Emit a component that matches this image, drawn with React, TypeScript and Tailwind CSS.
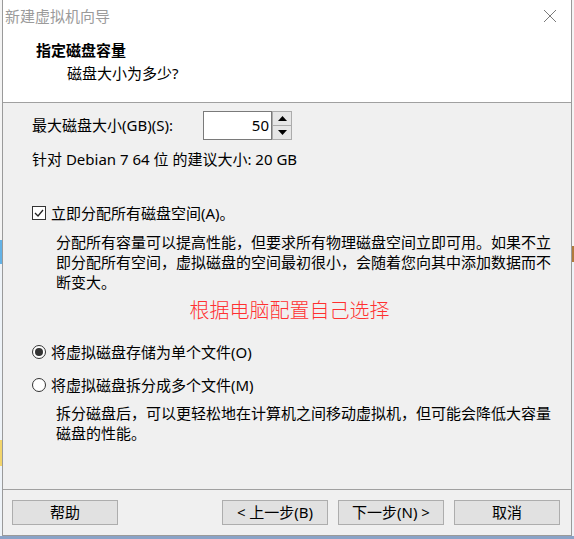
import React from 'react';

const font = "font-['Noto_Sans','Noto_Sans_CJK_SC',sans-serif]";

const WinButton: React.FC<{ label: string }> = ({ label }) => (
  <div className="w-[106px] h-[25px] flex items-center justify-center bg-[#e1e1e1] border border-[#adadad] text-[15px] text-black">
    {label}
  </div>
);

const Spinner: React.FC = () => (
  <div className="w-[20px] h-[29px] flex flex-col">
    <div className="flex-1 flex items-center justify-center bg-[#e6e6e6] border border-[#acacac]">
      <svg width="9" height="5" viewBox="0 0 9 5">
        <path d="M0 5 L4.5 0 L9 5 Z" fill="#000" />
      </svg>
    </div>
    <div className="flex-1 flex items-center justify-center bg-[#e6e6e6] border border-t-0 border-[#acacac]">
      <svg width="9" height="5" viewBox="0 0 9 5">
        <path d="M0 0 L9 0 L4.5 5 Z" fill="#000" />
      </svg>
    </div>
  </div>
);

const Radio: React.FC<{ checked?: boolean }> = ({ checked }) => (
  <div className="w-[14px] h-[14px] rounded-full border border-[#333] bg-white flex items-center justify-center">
    {checked && <div className="w-[8px] h-[8px] rounded-full bg-[#333]" />}
  </div>
);

export default function App() {
  return (
    <div className={`w-[574px] h-[539px] bg-[#f3f3f3] flex flex-col overflow-hidden ${font}`}>
      <div className="flex h-[536px]">
        {/* desktop peeking out on the left */}
        <div className="w-[2px] flex flex-col">
          <div className="h-[240px] bg-[#f4f4f4]" />
          <div className="h-[24px] bg-[#63b2e6]" />
          <div className="h-[176px] bg-[#eef3f8]" />
          <div className="h-[26px] bg-[#f3d56b]" />
          <div className="flex-1 bg-[#eef3f8]" />
        </div>

        <div className="w-[570px] h-[536px] flex flex-col border-l border-r border-b border-[#9a9a9a] bg-[#f0f0f0]">
          {/* title bar */}
          <div className="h-[32px] bg-white flex items-center justify-between pl-[2px] pr-[14px]">
            <span className="text-[15px] text-[#9b9b9b]">新建虚拟机向导</span>
            <svg width="14" height="14" viewBox="0 0 14 14">
              <path d="M1 1 L13 13 M13 1 L1 13" stroke="#7a7a7a" strokeWidth="1" />
            </svg>
          </div>

          {/* header */}
          <div className="h-[71px] bg-white border-b border-[#a0a0a0] pl-[33px] pt-[7px]">
            <div className="text-[15px] font-bold text-black leading-[22px]">指定磁盘容量</div>
            <div className="text-[15px] text-black leading-[22px] pl-[31px] mt-[1px]">磁盘大小为多少?</div>
          </div>

          {/* body */}
          <div className="flex-1 flex flex-col pl-[29px] text-[15px] text-black">
            <div className="mt-[8px] h-[29px] flex items-center">
              <span className="w-[171px]">最大磁盘大小(GB)(S):</span>
              <div className="w-[69px] h-[29px] bg-white border border-[#7a7a7a] flex items-center justify-end pr-[2px]">
                50
              </div>
              <Spinner />
            </div>

            <div className="mt-[9px] leading-[20px]">针对 Debian 7 64 位 的建议大小: 20 GB</div>

            <div className="mt-[34px] h-[20px] flex items-center">
              <div className="w-[14px] h-[14px] border border-[#333] bg-white flex items-center justify-center">
                <svg width="10" height="8" viewBox="0 0 10 8">
                  <path d="M1 4 L4 7 L9 1" stroke="#222" strokeWidth="1.3" fill="none" />
                </svg>
              </div>
              <span className="ml-[5px]">立即分配所有磁盘空间(A)。</span>
            </div>

            <div className="mt-[9px] pl-[24px] leading-[20px]">
              分配所有容量可以提高性能，但要求所有物理磁盘空间立即可用。如果不立
              <br />
              即分配所有空间，虚拟磁盘的空间最初很小，会随着您向其中添加数据而不
              <br />
              断变大。
            </div>

            <div className="mt-[5px] h-[28px] leading-[28px] text-center pr-[24px] text-[20px] font-light text-[#ff3030]">
              根据电脑配置自己选择
            </div>

            <div className="mt-[17px] h-[20px] flex items-center">
              <Radio checked />
              <span className="ml-[5px]">将虚拟磁盘存储为单个文件(O)</span>
            </div>

            <div className="mt-[13px] h-[20px] flex items-center">
              <Radio />
              <span className="ml-[5px]">将虚拟磁盘拆分成多个文件(M)</span>
            </div>

            <div className="mt-[8px] pl-[24px] leading-[20px]">
              拆分磁盘后，可以更轻松地在计算机之间移动虚拟机，但可能会降低大容量
              <br />
              磁盘的性能。
            </div>
          </div>

          {/* footer */}
          <div className="h-[46px] border-t border-[#a0a0a0] flex items-start pt-[10px] pl-[9px]">
            <WinButton label="帮助" />
            <div className="ml-[104px] flex gap-[10px]">
              <WinButton label="< 上一步(B)" />
              <WinButton label="下一步(N) >" />
              <WinButton label="取消" />
            </div>
          </div>
        </div>

        <div className="w-[2px] flex flex-col">
          <div className="h-[246px] bg-[#f4f4f4]" />
          <div className="h-[16px] bg-[#b07a3c]" />
          <div className="flex-1 bg-[#eef3f8]" />
        </div>
      </div>
      <div className="flex-1 bg-[#8aa3c7]" />
    </div>
  );
}
